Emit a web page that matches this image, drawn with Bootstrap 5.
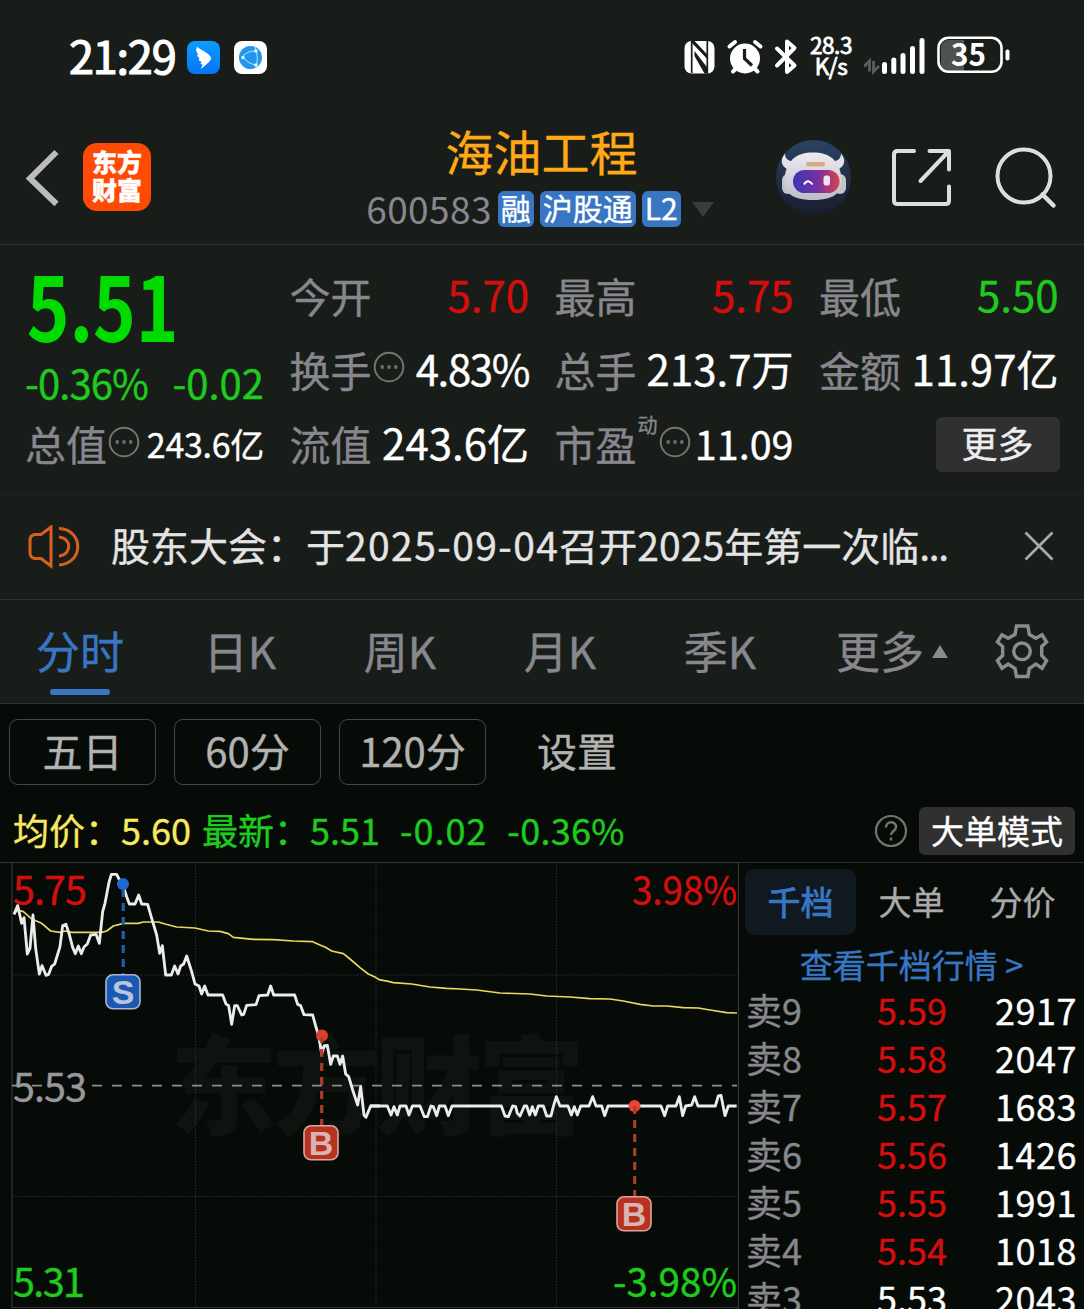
<!DOCTYPE html>
<html lang="zh-CN">
<head>
<meta charset="utf-8">
<meta name="viewport" content="width=device-width, initial-scale=1">
<title>海油工程 600583</title>
<link href="https://cdn.jsdelivr.net/npm/bootstrap@5.3.0/dist/css/bootstrap.min.css" rel="stylesheet">
<style>
:root{--up:#d60d0d;--down:#1ecb1e;--dim:#87878d;--blue:#3876c4;--line:#2d302e}
body{background:#070b08;color:#fff;font-family:"Noto Sans CJK SC",sans-serif;width:1084px;height:1309px;overflow:hidden;white-space:nowrap;-webkit-text-stroke:.35px currentcolor}
svg{display:block;flex:none;-webkit-text-stroke:0}
.c-up{color:var(--up)}.c-down{color:var(--down)}.c-dim{color:var(--dim)}.c-blue{color:var(--blue)}
.top-area{background:#191d1a}
.statusbar{height:114px;padding:0 74px 0 69px}
.clock{font-size:45px;line-height:66px;letter-spacing:-1.2px;-webkit-text-stroke:1.2px #fff;margin-top:-4px;width:118px}
.netspeed{font-size:22.500px;line-height:21px;width:46px;text-align:center;-webkit-text-stroke:.8px #fff;letter-spacing:-.4px;margin:-5px 10px 0 10px}
.head{height:131px;display:grid;grid-template-columns:340px 400px 1fr;border-bottom:1px solid var(--line)}
.app-logo{width:68px;height:68px;border-radius:14px;background:#ff4a05;font-weight:900;font-size:25px;line-height:28px;padding-top:4px}
.stock-name{font-size:48px;line-height:56px;color:#ffa915;margin-top:8px}
.stock-code{font-size:37px;line-height:36px;letter-spacing:.4px;margin-top:-3px;-webkit-text-stroke:0}
.tagbox{background:var(--blue);border-radius:6px;height:36px;font-size:30px;line-height:32px;padding:0 3px}
.quotes{height:250px;padding:0 25px 0 25px;display:grid;grid-template-columns:239px 239.500px 239px 239.500px;column-gap:25.500px;grid-template-rows:101px 47px 101px;border-bottom:1px solid #222523}
.quotes .lbl{font-size:41px;line-height:52px;color:var(--dim);margin-top:-2px}
.quotes .val{font-size:42px;line-height:52px;letter-spacing:0;margin-top:-3px}
.pricebox{grid-row:1 / 3}
.price{font-size:89px;line-height:100px;font-weight:700;color:#00dc00;transform:scaleX(.815);transform-origin:0 50%;padding-top:9px;padding-left:2px;-webkit-text-stroke:0}
.chg{font-size:40px;line-height:50px;padding-top:3px}
.more{width:124px;height:55px;border-radius:6px;background:#303030;font-size:36px;line-height:46px;padding-bottom:5px!important;color:#eee;border:0}
.notice{height:105px;border-bottom:1px solid var(--line);font-size:39px;color:#e4e4e4}
.notice .num{letter-spacing:1.4px}
.tabs{height:104px;border-bottom:1px solid var(--line);font-size:44px;color:var(--dim)}
.tabs .tb{width:160px;height:104px;text-align:center;line-height:100px;position:relative}
.tabs .tb.on{color:var(--blue)}
.tabs .tb.on::after{content:"";position:absolute;left:50px;top:89px;width:60px;height:6px;border-radius:3px;background:var(--blue)}
.periods{height:91px;padding:15px 9px 0;gap:18px;font-size:40px;color:#b2b2b0}
.periods .pd{width:147px;height:66px;border:1.5px solid #454846;border-radius:9px;line-height:61px;text-align:center}
.info{height:67px;padding:0 9px 0 13px;font-size:36px}
.mode{width:156px;height:48px;border-radius:6px;background:#303030;font-size:33px;line-height:46px;margin-top:4px}
.book{width:345px;border-top:1px solid var(--line)}
.book .bt{width:111px;height:66px;line-height:64px;font-size:33px;border-radius:9px;text-align:center;color:#aaa}
.book .bt.on{background:#101820;color:var(--blue);font-weight:500}
.look{font-size:33px;line-height:40px;height:44px;padding-top:9px;text-align:center}
.lv{height:48px;font-size:36px;line-height:44px;padding:0 7px}
.lv span:nth-child(1){width:131px}
.lv span:nth-child(3){margin-left:auto;letter-spacing:.5px}
</style>
</head>
<body>
<div class="top-area">
  <div class="statusbar d-flex align-items-center">
    <div class="clock">21:29</div>
    <svg width="33" height="33" viewBox="187 41 33 33"><defs><linearGradient id="dg" x2="0" y2="1"><stop stop-color="#0b9dff"/><stop offset="1" stop-color="#0874f5"/></linearGradient></defs><rect x="187" y="41" width="33" height="33" rx="8" fill="url(#dg)"/><path d="M197 46.500c3 3.500 9 4.500 13 9.500c2 2 1 4-1.500 6.500l-7.500 6.500l1.500-4.500l-2-.5l1-2l-3-2l1-1.500l-2.500-3l1-1l-2-4z" fill="#fff"/></svg>
    <svg width="33" height="33" viewBox="234 41 33 33" style="margin-left:14px"><rect x="234" y="41" width="33" height="33" rx="8" fill="#fff"/><circle cx="250.500" cy="57.500" r="11.500" fill="#2595ec"/><path d="M242 57Q248 50 257 51M242 57Q249 64 256 65.500M255 47Q259 57 256 68" fill="none" stroke="#aee6ff" stroke-width="1"/><circle cx="243" cy="57.500" r="1.700" fill="#dff"/><circle cx="256" cy="51" r="1.700" fill="#dff"/><circle cx="256" cy="65" r="1.700" fill="#dff"/></svg>
    <svg class="ms-auto" width="114" height="40" viewBox="686 37 114 40">
      <rect x="686.500" y="41" width="30" height="32.500" rx="7" fill="#fff"/><path d="M693.700 41V73M709.300 41V73.500" stroke="#191d1a" stroke-width="1.700"/><path d="M693 41h3.500l12.800 13.500v4.500L693 42zM710 73.500h-3.500L696.500 56v-5L710 68.500z" fill="#191d1a"/>
      <circle cx="747" cy="58.500" r="15" fill="#fff"/><path d="M731.500 46.500l5.500-4.500M762.500 46.500l-5.500-4.500M735 71.500l4-4M759.500 71.500l-4-4" stroke="#fff" stroke-width="4" stroke-linecap="round"/><path d="M746.500 49v9.500l7.500 7" fill="none" stroke="#191d1a" stroke-width="3.200"/>
      <path d="M779 48.500l17.500 17l-7.500 6.500V41.500l7.500 6.500L779 65.500" fill="none" stroke="#fff" stroke-width="4" stroke-linecap="round" stroke-linejoin="round"/>
    </svg>
    <div class="netspeed">28.3<br>K/s</div>
    <svg width="146" height="44" viewBox="864 36 146 44">
      <path d="M869.500 72.500V62L864 67.500M873.500 62v10.500L879 67" fill="none" stroke="#5c5e5d" stroke-width="2.800"/>
      <path d="M884.500 65.500v7M893.800 61v11.500M903 56.500v16M912.500 49.500v23M922 41.500v31" stroke="#fff" stroke-width="5" stroke-linecap="round"/>
      <path d="M948 41h16v31h-16a7 7 0 0 1-7-7V48a7 7 0 0 1 7-7" fill="#505250"/><rect x="938.500" y="38.800" width="63" height="34" rx="10" fill="none" stroke="#fff" stroke-width="2.600"/><path d="M1007.500 52.500v7" stroke="#fff" stroke-width="4" stroke-linecap="round"/>
      <text x="951" y="67" font-size="31" font-weight="700" fill="#fff" textLength="35" lengthAdjust="spacingAndGlyphs">35</text>
    </svg>
  </div>

  <div class="head">
    <div class="d-flex align-items-center">
      <svg width="58" height="64" viewBox="2 146 58 64" style="margin-left:2px"><path d="M56.500 151L30 177.500L56.500 203" fill="none" stroke="#bcbcbc" stroke-width="6"/></svg>
      <div class="app-logo text-center" style="margin-left:23px;margin-top:-4px">东方<br>财富</div>
    </div>
    <div class="d-flex flex-column align-items-center">
      <div class="stock-name" style="margin-left:3px">海油工程</div>
      <div class="d-flex align-items-center" style="margin-top:13px">
        <span class="stock-code c-dim" style="margin-right:6px">600583</span><span class="tagbox">融</span><span class="tagbox" style="margin-left:6px">沪股通</span><span class="tagbox" style="margin-left:6px">L2</span>
        <svg width="22" height="15" viewBox="0 0 22 15" style="margin-left:11px"><path d="M0 0h22L11 15z" fill="#3b3d3c"/></svg>
      </div>
    </div>
    <div class="d-flex align-items-center">
      <svg width="320" height="80" viewBox="739 139 320 80">
        <defs><linearGradient id="vis"><stop stop-color="#3a35b5"/><stop offset=".55" stop-color="#7b309f"/><stop offset="1" stop-color="#d8434c"/></linearGradient><linearGradient id="rb" x2="0" y2="1"><stop stop-color="#2b4264"/><stop offset="1" stop-color="#171d2c"/></linearGradient><linearGradient id="hl" x2="0" y2="1"><stop stop-color="#eeeaf2"/><stop offset="1" stop-color="#bebdc6"/></linearGradient></defs>
        <circle cx="812.500" cy="177.500" r="37.500" fill="url(#rb)"/>
        <path d="M784 153.500c-5 6-4 12 2 15.500l9-8c-7 1-11-2-11-7.500M840 153.500c5 6 4 12-2 15.500l-9-8c7 1 11-2 11-7.500" fill="#e3e1e9"/>
        <rect x="781" y="174" width="12" height="20" rx="6" fill="#c4c3cc"/><rect x="833" y="174" width="12" height="20" rx="6" fill="#c4c3cc"/>
        <path d="M812 152.500c17 0 25 8 28 22c3 16-4 25.500-28 25.500s-31-9.500-28-25.500c3-14 11-22 28-22" fill="url(#hl)"/>
        <rect x="805" y="162" width="19" height="4.500" rx="2" fill="#d9a886"/>
        <rect x="792" y="170" width="46.500" height="23" rx="11.500" fill="url(#vis)"/><path d="M803 184.500q4-6.500 8.500 0" fill="none" stroke="#fff" stroke-width="2"/><rect x="822.500" y="175.500" width="6.500" height="10" rx="2.500" fill="#f6dff0"/>
        <path d="M913 151h-16.500q-3.500 0-3.500 3.500v46q0 3.500 3.500 3.500h48q3.500 0 3.500-3.500v-14M928.500 151h19.500v18.500M947.500 151.500l-28 29.500" fill="none" stroke="#dedede" stroke-width="4" stroke-linecap="round" stroke-linejoin="round"/>
        <circle cx="1023" cy="176" r="26.500" fill="none" stroke="#dedede" stroke-width="4"/><path d="M1041.500 194.500l11 11" stroke="#dedede" stroke-width="4.500" stroke-linecap="round"/>
      </svg>
    </div>
  </div>

  <div class="quotes">
    <div class="pricebox">
      <div class="price">5.51</div>
      <div class="chg c-down d-flex justify-content-between"><span style="letter-spacing:-.9px">-0.36%</span><span>-0.02</span></div>
    </div>
    <div class="d-flex align-items-center justify-content-between"><span class="lbl">今开</span><span class="val c-up">5.70</span></div>
    <div class="d-flex align-items-center justify-content-between"><span class="lbl">最高</span><span class="val c-up">5.75</span></div>
    <div class="d-flex align-items-center justify-content-between"><span class="lbl">最低</span><span class="val c-down">5.50</span></div>
    <div class="d-flex align-items-center justify-content-between"><span class="lbl">换手</span><svg width="32" height="32" viewBox="0 0 32 32" style="margin:-5px auto 0 1px"><circle cx="16" cy="16" r="14.300" fill="none" stroke="#73746f" stroke-width="2"/><path d="M7.700 16h3M14.500 16h3M21.300 16h3" stroke="#73746f" stroke-width="3.400"/></svg><span class="val" style="letter-spacing:-1.400px">4.83%</span></div>
    <div class="d-flex align-items-center justify-content-between"><span class="lbl">总手</span><span class="val">213.7万</span></div>
    <div class="d-flex align-items-center justify-content-between"><span class="lbl">金额</span><span class="val">11.97亿</span></div>
    <div class="d-flex align-items-center justify-content-between"><span class="lbl">总值</span><svg width="32" height="32" viewBox="0 0 32 32" style="margin:-4px auto 0 1px"><circle cx="16" cy="16" r="14.300" fill="none" stroke="#73746f" stroke-width="2"/><path d="M7.700 16h3M14.500 16h3M21.300 16h3" stroke="#73746f" stroke-width="3.400"/></svg><span class="val" style="font-size:34px;letter-spacing:-.3px;margin-top:0">243.6亿</span></div>
    <div class="d-flex align-items-center justify-content-between"><span class="lbl">流值</span><span class="val">243.6亿</span></div>
    <div class="d-flex align-items-center justify-content-between"><span class="lbl">市盈</span><span class="c-dim" style="font-size:20px;margin-top:-38px;margin-left:1px">动</span><svg width="32" height="32" viewBox="0 0 32 32" style="margin:-4px auto 0 1px"><circle cx="16" cy="16" r="14.300" fill="none" stroke="#73746f" stroke-width="2"/><path d="M7.700 16h3M14.500 16h3M21.300 16h3" stroke="#73746f" stroke-width="3.400"/></svg><span class="val" style="font-size:39.500px;margin-top:-1px">11.09</span></div>
    <div class="d-flex align-items-center justify-content-end"><button class="more p-0" type="button" style="margin-right:-1px;margin-top:1px">更多</button></div>
  </div>

  <div class="notice d-flex align-items-center">
    <svg width="54" height="44" viewBox="29 526 54 44" style="margin-left:28px"><path d="M52 527.500v39L42 559h-6.500q-4.500-1-4.500-6v-12q0-5 4.500-6H42zM60 529c25 1 25 35 0 36.500M60 537.500c13 1 13 18 0 19" transform="translate(0 .5)" fill="none" stroke="#d9601c" stroke-width="3"/></svg>
    <div style="margin-left:29px;margin-top:-6px">股东大会：于<span class="num">2025-09-04</span>召开<span class="num" style="letter-spacing:.1px">2025</span>年第一次临<span style="letter-spacing:-1.4px">...</span></div>
    <svg class="ms-auto" width="30" height="30" viewBox="0 0 30 30" style="margin-right:30px;margin-top:-2px"><path d="M1.500 1.500l27 27M28.500 1.500l-27 27" stroke="#a9a9a9" stroke-width="2.800"/></svg>
  </div>

  <div class="tabs d-flex align-items-center">
    <div class="tb on">分时</div><div class="tb">日K</div><div class="tb">周K</div><div class="tb">月K</div><div class="tb">季K</div>
    <div style="margin-left:36px;margin-top:-4px">更多</div>
    <svg width="16" height="13" viewBox="0 0 16 13" style="margin-left:8px"><path d="M8 0l8 13H0z" fill="#8b8b91"/></svg>
    <svg class="ms-auto" width="54" height="56" viewBox="1312 391 156 162" style="margin-right:35px"><path d="M1374 397H1407L1411 421L1430 432L1448 422L1461 443L1447 456V482L1461 497L1448 519L1430 507L1411 520L1407 543H1374L1370 520L1350 507L1332 519L1319 497L1334 482V456L1319 443L1332 422L1350 432L1370 421Z" fill="none" stroke="#8b8b91" stroke-width="10"/><circle cx="1390" cy="470" r="24" fill="none" stroke="#8b8b91" stroke-width="10"/></svg>
  </div>
</div>

<div class="periods d-flex">
  <div class="pd">五日</div><div class="pd">60分</div><div class="pd">120分</div><div style="line-height:62px;margin-left:33px">设置</div>
</div>
<div class="info d-flex align-items-center">
  <span style="color:#f8e961;margin-right:11px">均价：5.60</span>
  <span class="c-down">最新：5.51</span>
  <span class="c-down" style="margin-left:20px;letter-spacing:1px">-0.02</span>
  <span class="c-down" style="margin-left:20px;letter-spacing:.3px">-0.36%</span>
  <svg class="ms-auto" width="34" height="34" viewBox="0 0 34 34" style="margin-right:11px;margin-top:4px"><circle cx="17" cy="17" r="15" fill="none" stroke="#73746f" stroke-width="2.200"/><path d="M12 13.500c0-7 10-7 10-.5c0 4-5 4-5 8M17 23.500v3" fill="none" stroke="#73746f" stroke-width="2.500"/></svg>
  <div class="mode text-center">大单模式</div>
</div>

<div class="d-flex">
  <svg width="739" height="447" viewBox="0 862 739 447">
    <text x="170" y="1126" font-size="107" font-weight="900" fill="#0f1310" textLength="415">东方财富</text>
    <path d="M0 862.500H739M12 862V1308M738.500 862V1309M12 1307.500H739" stroke="#353535" fill="none" stroke-width="1.200"/>
    <path d="M195.500 864V1308M376 864V1308M556.500 864V1308M12 975H738M12 1196.500H738" stroke="#2c2e2c" stroke-dasharray="1.500 1.500" fill="none"/>
    <path d="M12 1085.700H737" stroke="#8e8e8e" stroke-width="1.700" stroke-dasharray="10 10"/>
    <g font-size="39.500" stroke-width=".4">
      <text x="13" y="905" fill="#d60d0d" stroke="#d60d0d" textLength="74">5.75</text>
      <text x="632" y="905" fill="#d60d0d" stroke="#d60d0d" textLength="105" lengthAdjust="spacingAndGlyphs">3.98%</text>
      <text x="13" y="1101.500" fill="#98989c" stroke="#98989c" textLength="74">5.53</text>
      <text x="13" y="1297" fill="#1ecb1e" stroke="#1ecb1e" textLength="72">5.31</text>
      <text x="613" y="1297" fill="#1ecb1e" stroke="#1ecb1e" textLength="124" lengthAdjust="spacingAndGlyphs">-3.98%</text>
    </g>
    <g fill="none" stroke-linejoin="round">
      <g stroke="#e9d95c" stroke-width="5">
        <polyline transform="translate(0 795) scale(.33333)" points="42,358 53,345 70,350 95,372 125,385 152,408 180,412 195,408 215,412 305,412 320,408 340,393 370,385 415,385 430,381 475,381 495,387 530,396 585,399 625,408 660,409 685,416 700,427 760,433 820,434 880,438 938,440 960,450 975,456 995,468 1030,476 1050,492 1080,518 1105,537 1125,546 1137,554 1165,559 1180,563 1235,567 1290,576 1340,580 1380,582 1430,585 1500,594 1590,597 1640,603 1710,606 1770,611 1830,612 1870,618 1920,628 1960,633 2000,633 2050,638 2095,639 2130,645 2180,653 2211,654"/>
      </g>
      <g stroke="#ececec" stroke-width="8.500">
        <polyline transform="translate(0 795) scale(.33333)" points="42,358 53,332 65,385 72,368 82,477 90,460 99,360 107,460 118,537 126,512 138,541 146,538 155,514 164,507 180,455 188,392 198,388 207,415 218,457 226,476 235,453 244,476 252,456 262,447 272,420 288,418 298,445 308,350 315,325 327,262 334,238 350,238 357,252 370,275 380,305 388,327 405,327 416,300 425,327 443,328 458,380 470,420 479,475 487,452 497,540 514,540 524,513 534,537 542,513 551,507 560,483 575,530 585,567 597,573 605,597 614,573 624,600 668,600 678,627 686,632 695,688 704,632 712,632 725,660 731,658 740,631 768,629 777,602 803,600 812,573 821,600 884,600 893,628 902,632 912,659 938,660 947,693 956,722 965,777 972,753 982,751 992,808 1000,783 1012,783 1020,808 1028,783 1037,837 1046,845 1058,885 1073,930 1082,875 1092,960 1098,967 1105,950 1112,933 1140,933"/>
        <polyline transform="translate(370 1030) scale(.33333)" points="0,228 52,228 63,255 72,230 82,255 90,228 108,228 117,255 127,228 150,228 163,260 172,260 183,228 190,230 200,257 208,228 225,228 235,257 246,228 394,228 405,258 415,260 428,228 437,230 442,250 450,258 463,228 470,228 479,255 487,230 496,255 505,228 520,228 530,258 543,258 550,230 559,200 570,228 594,228 604,255 613,230 622,255 632,228 657,228 668,200 678,228 695,228 704,257 714,228 873,228 884,257 893,228 918,228 928,200 938,257 947,228 965,225 974,200 984,228 1036,228 1045,198 1053,196 1065,257 1075,228 1100,228"/>
      </g>
    </g>
    <circle cx="123" cy="884" r="6" fill="#2468cf"/><path d="M123.200 886V974" stroke="#225dab" stroke-width="3.200" stroke-dasharray="8 6" stroke-dashoffset="-3"/>
    <circle cx="322" cy="1035.500" r="6" fill="#d8402c"/><path d="M321.700 1038V1125" stroke="#ad3a2b" stroke-width="3.200" stroke-dasharray="8 6" stroke-dashoffset="3"/>
    <circle cx="634.500" cy="1106" r="6" fill="#e8442f"/><path d="M634.700 1106V1196" stroke="#ad3a2b" stroke-width="3.200" stroke-dasharray="8 6"/>
    <g stroke-width="1.600"><rect x="106" y="974.800" width="34" height="34" rx="7" fill="#1b58b1" stroke="#a9b8d0"/><rect x="304" y="1125.800" width="34" height="34" rx="7" fill="#b93220" stroke="#d5a8a4"/><rect x="617" y="1196.800" width="34" height="34" rx="7" fill="#b93220" stroke="#d5a8a4"/></g>
    <g font-family="Liberation Sans" font-size="34" font-weight="700" text-anchor="middle"><text x="123" y="1004" fill="#b7c5dd">S</text><text x="321" y="1155" fill="#d8b4b3">B</text><text x="634" y="1226" fill="#d8b4b3">B</text></g>
  </svg>
  <div class="book">
    <div class="d-flex" style="padding:6px 0 0 6px"><div class="bt on">千档</div><div class="bt">大单</div><div class="bt">分价</div></div>
    <div class="look c-blue">查看千档行情 &gt;</div>
    <div class="lv d-flex" style="margin-top:8px"><span class="c-dim">卖9</span><span class="c-up">5.59</span><span>2917</span></div>
    <div class="lv d-flex"><span class="c-dim">卖8</span><span class="c-up">5.58</span><span>2047</span></div>
    <div class="lv d-flex"><span class="c-dim">卖7</span><span class="c-up">5.57</span><span>1683</span></div>
    <div class="lv d-flex"><span class="c-dim">卖6</span><span class="c-up">5.56</span><span>1426</span></div>
    <div class="lv d-flex"><span class="c-dim">卖5</span><span class="c-up">5.55</span><span>1991</span></div>
    <div class="lv d-flex"><span class="c-dim">卖4</span><span class="c-up">5.54</span><span>1018</span></div>
    <div class="lv d-flex"><span class="c-dim">卖3</span><span>5.53</span><span>2043</span></div>
  </div>
</div>
<script src="https://cdn.jsdelivr.net/npm/bootstrap@5.3.0/dist/js/bootstrap.bundle.min.js"></script>
</body>
</html>
